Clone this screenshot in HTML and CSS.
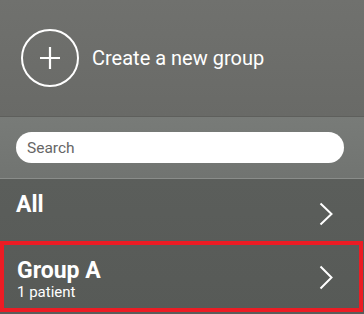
FILE: index.html
```html
<!DOCTYPE html>
<html>
    <head>
        <meta http-equiv="Content-Type" content="text/html; charset=UTF-8"/>
        <title>Groups</title>
        <link rel="stylesheet" href="styles.css">
    </head>
    <body>
        <div class="panel">
            <div class="create">
                <div class="create-icon">
                    <svg width="58" height="58" viewBox="0 0 58 58">
                        <circle cx="29" cy="29" r="28" fill="none" stroke="#fff" stroke-width="2"/>
                        <path d="M19 29h20M29 18v22" stroke="#fff" stroke-width="2.2" fill="none"/>
                    </svg>
                </div>
                <span class="create-text">Create a new group</span>
            </div>
            <div class="search-bar">
                <input class="search" type="text" placeholder="Search">
            </div>
            <div class="list">
                <div class="row row-all">
                    <div class="name">All</div>
                    <svg class="chev" width="14" height="24" viewBox="0 0 14 24">
                        <path d="M1.5 1.5L12.5 12L1.5 22.5" stroke="#fff" stroke-width="2" fill="none"/>
                    </svg>
                </div>
                <div class="row row-group selected">
                    <div>
                        <div class="name group-name">Group A</div>
                        <div class="sub">1 patient</div>
                    </div>
                    <svg class="chev" width="14" height="25" viewBox="0 0 14 25">
                        <path d="M1.5 1.5L12.5 12.5L1.5 23.5" stroke="#fff" stroke-width="2" fill="none"/>
                    </svg>
                </div>
            </div>
        </div>
    </body>
</html>
```

FILE: styles.css
```css
html, body{
    margin:0;
    padding:0;
    background:#5a5d5a;
}
body{
    font-family:Roboto, "Liberation Sans", sans-serif;
    color:#fff;
}
.panel{
    width:364px;
    height:314px;
    overflow:hidden;
}
.create{
    height:117px;
    box-sizing:border-box;
    padding:29px 0 0 21px;
    display:flex;
    align-items:flex-start;
    background:linear-gradient(#70716e, #696a67);
    border-bottom:1px solid #5e5f5c;
}
.create-icon{
    width:58px;
    height:58px;
}
.create-icon svg{
    display:block;
}
.create-text{
    margin:17px 0 0 13px;
    font-size:20px;
    line-height:24px;
}
.search-bar{
    height:62px;
    box-sizing:border-box;
    padding:15px 20px 0 16px;
    background:linear-gradient(#787b78, #717471);
    border-bottom:1px solid #8a8d8a;
}
.search{
    display:block;
    width:100%;
    height:31px;
    box-sizing:border-box;
    border:none;
    border-radius:16px;
    padding:1px 11px 0;
    background:#fff;
    font-family:Roboto, "Liberation Sans", sans-serif;
    font-size:15.5px;
    color:#333;
    outline:none;
}
.search::placeholder{
    color:#666;
}
.list{
    background:linear-gradient(#5b5e5b, #575a57);
}
.row{
    display:flex;
    align-items:flex-start;
    justify-content:space-between;
    box-sizing:border-box;
}
.row-all{
    height:62px;
    padding:14px 31px 0 16px;
}
.row-all .chev{
    margin-top:9px;
}
.row-group{
    width:363px;
    height:71px;
    padding:12px 26px 0 13px;
}
.row-group .chev{
    margin-top:8px;
}
.selected{
    border:4px solid #ec1c24;
}
.name{
    font-size:23px;
    font-weight:bold;
    line-height:24px;
}
.group-name{
    line-height:27px;
}
.sub{
    font-size:15px;
    line-height:16px;
}
.chev{
    display:block;
}
```
